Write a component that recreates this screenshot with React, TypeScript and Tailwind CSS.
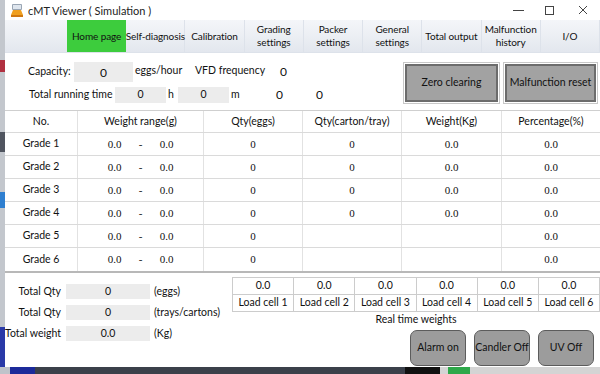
import React from "react";

const tabs: string[][] = [
  ["Home page"],
  ["Self-diagnosis"],
  ["Calibration"],
  ["Grading", "settings"],
  ["Packer", "settings"],
  ["General", "settings"],
  ["Total output"],
  ["Malfunction", "history"],
  ["I/O"],
];

const grades = [
  { n: "Grade 1", q: "0", c: "0", w: "0.0", p: "0.0" },
  { n: "Grade 2", q: "0", c: "0", w: "0.0", p: "0.0" },
  { n: "Grade 3", q: "0", c: "0", w: "0.0", p: "0.0" },
  { n: "Grade 4", q: "0", c: "0", w: "0.0", p: "0.0" },
  { n: "Grade 5", q: "0", c: "", w: "", p: "0.0" },
  { n: "Grade 6", q: "0", c: "", w: "", p: "0.0" },
];

const sans = "font-['Lato',sans-serif]";
const serif = "font-['Liberation_Serif',serif]";

function Icon() {
  return (
    <svg width="14" height="14" viewBox="0 0 14 14">
      <rect x="2" y="1" width="10" height="6" rx="1" fill="#9aa6b4" />
      <rect x="3" y="2" width="8" height="4" fill="#dfe6ee" />
      <path d="M1 12 L3 7 L11 7 L13 12 Z" fill="#f0a020" />
      <rect x="1" y="12" width="12" height="2" fill="#d07810" />
    </svg>
  );
}

const cell = "flex items-center justify-center whitespace-nowrap";

export default function App() {
  return (
    <div className={`w-[600px] h-[374px] overflow-hidden flex flex-col bg-white text-[#111] ${sans}`}>
      <div className="flex h-[367px]">
        <div className="w-[5px] h-full bg-[#c3c7cd] flex flex-col">
          <div className="h-[60px]" />
          <div className="h-[12px] bg-[#b03040]" />
          <div className="h-[60px]" />
          <div className="h-[20px] bg-[#505560]" />
          <div className="h-[40px]" />
          <div className="h-[16px] bg-[#2f7fd0]" />
          <div className="flex-1" />
          <div className="h-[40px] bg-[#2a3aa8]" />
        </div>
        <div className="flex-1 flex flex-col">
          {/* title bar */}
          <div className="h-[20px] flex items-center bg-white">
            <div className="ml-[5px] mr-[4px] flex items-center"><Icon /></div>
            <span className="text-[11px] leading-none text-[#222] whitespace-nowrap">cMT Viewer ( Simulation )</span>
            <div className="flex-1" />
            <div className="w-[11px] h-[1px] bg-[#444] mr-[21px]" />
            <div className="w-[9px] h-[9px] border border-[#444] mr-[24px]" />
            <svg width="10" height="10" viewBox="0 0 10 10" className="mr-[12px]">
              <path d="M1 1 L9 9 M9 1 L1 9" stroke="#444" strokeWidth="1" />
            </svg>
          </div>
          {/* tabs */}
          <div className="h-[33px] flex bg-gradient-to-b from-[#f4f6f9] to-[#e3e7ee] border-b border-[#dde2ea]">
            <div className="w-[62px]" />
            <div className="flex-1 grid grid-cols-9">
              {tabs.map((t, i) => (
                <div
                  key={i}
                  className={`flex flex-col items-center justify-center text-[10px] leading-[13px] tracking-[-0.1px] text-[#111] ${
                    i === 0 ? "bg-[#3dcc3d]" : "border-r border-[#dde2ea]"
                  }`}
                >
                  {t.map((l, j) => (
                    <span key={j} className="whitespace-nowrap">{l}</span>
                  ))}
                </div>
              ))}
            </div>
          </div>
          {/* top info */}
          <div className="h-[57px] flex">
            <div className="flex-1 flex flex-col">
              <div className="flex items-center mt-[9px] h-[20px] text-[10.5px] whitespace-nowrap">
                <span className="ml-[23px] w-[46px]">Capacity:</span>
                <div className="w-[59px] h-[20px] bg-[#ececec] flex items-center justify-center text-[12px] pt-[2px]">0</div>
                <span className="ml-[2px] w-[60px] -mt-[3px]">eggs/hour</span>
                <span className="w-[85px] -mt-[2px]">VFD frequency</span>
                <span className="text-[12px]">0</span>
              </div>
              <div className="flex items-center mt-[5px] h-[16px] text-[10.5px] whitespace-nowrap">
                <span className="ml-[24px] w-[86px]">Total running time</span>
                <div className="w-[51px] h-[16px] bg-[#ececec] flex items-center justify-center">0</div>
                <span className="ml-[2px] w-[10px]">h</span>
                <div className="w-[51px] h-[16px] bg-[#ececec] flex items-center justify-center">0</div>
                <span className="ml-[2px] w-[45px]">m</span>
                <span className="w-[40px] text-[12px]">0</span>
                <span className="text-[12px]">0</span>
              </div>
            </div>
            <div className="flex gap-[3px] mt-[9px] mr-[2px] h-[42px]">
              <div className="w-[97px] h-full border border-[#c8c8c8] p-[1px]">
                <div className="w-full h-full bg-[#a2a2a2] border-[2px] border-[#6c6c6c] flex items-center justify-center text-[10.5px] whitespace-nowrap">Zero clearing</div>
              </div>
              <div className="w-[95px] h-full border border-[#c8c8c8] p-[1px]">
                <div className="w-full h-full bg-[#a2a2a2] border-[2px] border-[#6c6c6c] flex items-center justify-center text-[10.5px] whitespace-nowrap">Malfunction reset</div>
              </div>
            </div>
          </div>
          {/* table */}
          <div className="border-t border-[#cfcfcf] border-b-[2px] border-b-[#b8b8b8]">
            <div className="grid grid-cols-[73px_126px_99px_99px_100px_98px] h-[22px] text-[10.5px] border-b border-[#dadada]">
              <div className={`${cell} border-r border-[#e2e2e2]`}>No.</div>
              <div className={`${cell} border-r border-[#e2e2e2]`}>Weight range(g)</div>
              <div className={`${cell} border-r border-[#e2e2e2]`}>Qty(eggs)</div>
              <div className={`${cell} border-r border-[#e2e2e2]`}>Qty(carton/tray)</div>
              <div className={`${cell} border-r border-[#e2e2e2]`}>Weight(Kg)</div>
              <div className={cell}>Percentage(%)</div>
            </div>
            {grades.map((g, i) => (
              <div
                key={i}
                className={`grid grid-cols-[73px_126px_99px_99px_100px_98px] h-[23px] ${i < 5 ? "border-b border-[#dadada]" : ""}`}
              >
                <div className={`${cell} border-r border-[#e2e2e2] text-[10.5px]`}>{g.n}</div>
                <div className={`${cell} border-r border-[#e2e2e2] text-[11px] ${serif}`}>
                  <span className="w-[26px] text-center">0.0</span>
                  <span className="w-[26px] text-center">-</span>
                  <span className="w-[26px] text-center">0.0</span>
                </div>
                <div className={`${cell} border-r border-[#e2e2e2] text-[11px] ${serif}`}>{g.q}</div>
                <div className={`${cell} border-r border-[#e2e2e2] text-[11px] ${serif}`}>{g.c}</div>
                <div className={`${cell} border-r border-[#e2e2e2] text-[11px] ${serif}`}>{g.w}</div>
                <div className={`${cell} text-[11px] ${serif}`}>{g.p}</div>
              </div>
            ))}
          </div>
          {/* bottom */}
          <div className="flex-1 flex">
            <div className="w-[227px] flex flex-col gap-[6px] pt-[11px] text-[10.5px]">
              {[
                ["Total Qty", "0", "(eggs)"],
                ["Total Qty", "0", "(trays/cartons)"],
                ["Total weight", "0.0", "(Kg)"],
              ].map((r, i) => (
                <div key={i} className="flex items-center h-[15px]">
                  <span className="w-[56px] text-right whitespace-nowrap">{r[0]}</span>
                  <div className="ml-[5px] w-[84px] h-[15px] bg-[#ececec] flex items-center justify-center">{r[1]}</div>
                  <span className="ml-[4px] whitespace-nowrap">{r[2]}</span>
                </div>
              ))}
            </div>
            <div className="flex-1 flex flex-col pt-[4px]">
              <div className="grid grid-cols-6 border-l border-t border-[#cccccc] text-[10.5px]">
                {[1, 2, 3, 4, 5, 6].map((n) => (
                  <div key={"v" + n} className={`h-[17px] ${cell} border-r border-b border-[#cccccc]`}>0.0</div>
                ))}
                {[1, 2, 3, 4, 5, 6].map((n) => (
                  <div key={"l" + n} className={`h-[17px] ${cell} border-r border-b border-[#cccccc]`}>Load cell {n}</div>
                ))}
              </div>
              <div className="text-center text-[10.5px] leading-[12px] mt-[1px]">Real time weights</div>
              <div className="flex justify-end gap-[8px] mr-[6px] mt-[5px]">
                {["Alarm on", "Candler Off", "UV Off"].map((b) => (
                  <div
                    key={b}
                    className="w-[56px] h-[36px] rounded-[7px] bg-[#9c9c9c] border-[1.5px] border-[#5c5c5c] flex items-center justify-center text-[10.5px] whitespace-nowrap"
                  >
                    {b}
                  </div>
                ))}
              </div>
            </div>
          </div>
        </div>
      </div>
      <div className="h-[7px] flex bg-[#3b404a]">
        <div className="w-[10px] bg-[#bfc3ca]" />
        <div className="w-[25px] bg-[#1c2a9a]" />
        <div className="w-[370px]" />
        <div className="w-[35px] bg-[#111]" />
        <div className="flex-1 bg-[#d4d4d4] flex">
          <div className="ml-[8px] w-[22px] bg-[#2ea84a]" />
        </div>
      </div>
    </div>
  );
}
